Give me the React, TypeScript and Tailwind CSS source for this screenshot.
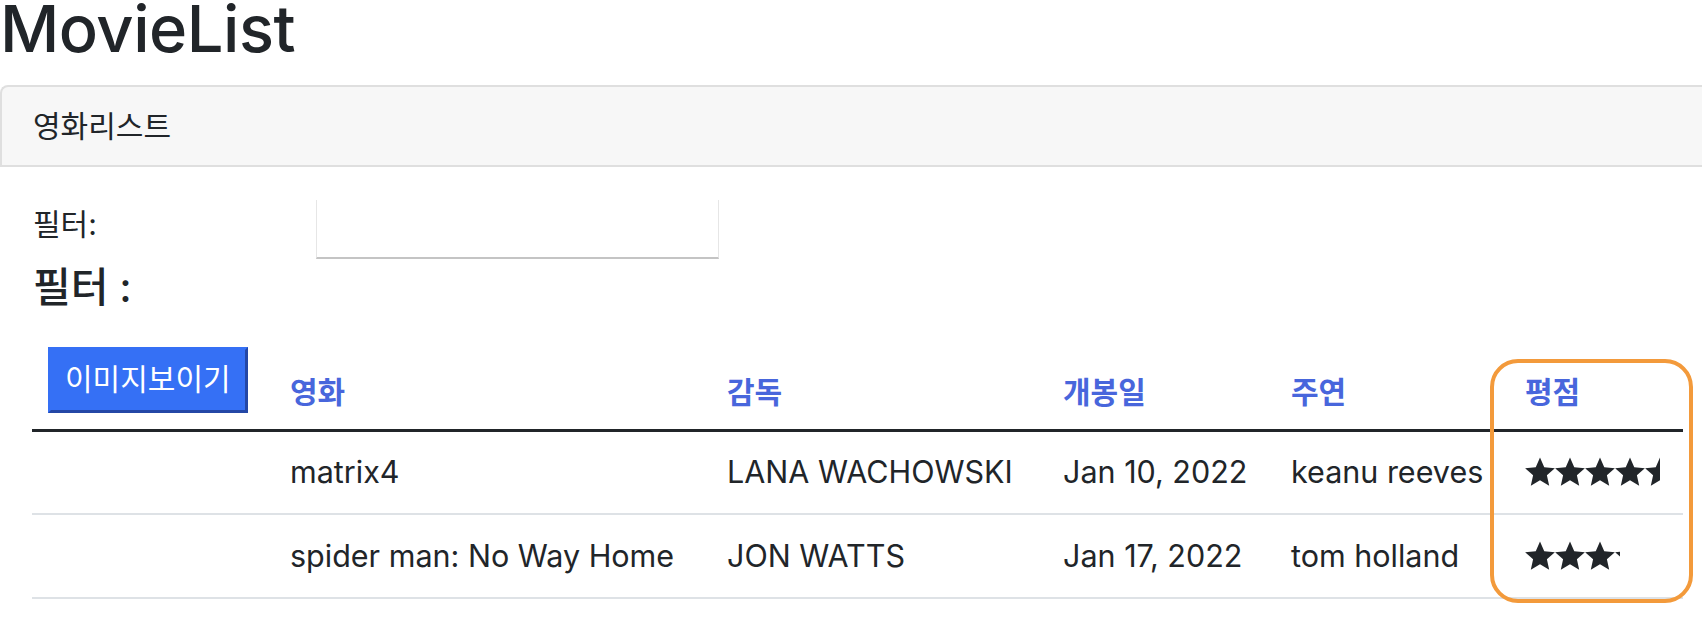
import React from 'react';

const FONT = '"Inter", "Noto Sans CJK KR", sans-serif';

type Movie = { title: string; director: string; date: string; actor: string; rate: number };

const movies: Movie[] = [
    { title: 'matrix4', director: 'LANA WACHOWSKI', date: 'Jan 10, 2022', actor: 'keanu reeves', rate: 4.5 },
    { title: 'spider man: No Way Home', director: 'JON WATTS', date: 'Jan 17, 2022', actor: 'tom holland', rate: 3.18 },
];

function Star() {
    return (
        <svg width="30" height="30" viewBox="0 0 24 24" className="shrink-0">
            <path d="M12 0.3L15.41 8.11L23.89 8.94L17.52 14.59L19.35 22.91L12 18.6L4.65 22.91L6.48 14.59L0.11 8.94L8.59 8.11Z" fill="#212529" />
        </svg>
    );
}

function Stars({ rate }: { rate: number }) {
    return (
        <div className="overflow-hidden" style={{ width: rate * 30 }}>
            <div className="flex w-[150px]">
                {[0, 1, 2, 3, 4].map(i => <Star key={i} />)}
            </div>
        </div>
    );
}

export default function App() {
    return (
        <div className="relative w-full h-[628px] overflow-hidden bg-white text-[#212529]" style={{ fontFamily: FONT }}>
            <h1 className="text-[65px] leading-[58px] h-[58px] font-medium tracking-[-0.5px]">MovieList</h1>

            <div className="mt-[27px] h-[82px] flex items-center pl-[31px] bg-[#f7f7f7] border-2 border-r-0 border-[#dfdfdf] rounded-tl-[8px] text-[30px]">
                영화리스트
            </div>

            <div className="pl-[33px]">
                <div className="mt-[33px] flex items-start h-[59px]">
                    <label className="w-[283px] mt-[2px] text-[30px] leading-[44px]">필터:</label>
                    <input className="w-[403px] h-[59px] bg-white border-l border-r border-[#e6e6e6] border-b-2 border-b-[#c4c4c4] outline-none" />
                </div>
                <h4 className="mt-[4px] text-[41px] leading-[48px] font-medium">필터 :</h4>
            </div>

            <table className="ml-[32px] w-[1651px] table-fixed border-collapse text-[30.5px]">
                <colgroup>
                    <col className="w-[242px]" />
                    <col className="w-[437px]" />
                    <col className="w-[336px]" />
                    <col className="w-[228px]" />
                    <col className="w-[234px]" />
                    <col className="w-[174px]" />
                </colgroup>
                <thead>
                    <tr className="h-[119px] border-b-[3px] border-[#212529]">
                        <th className="align-bottom text-left pl-[16px] pb-[16px]">
                            <button className="h-[66px] px-[14px] bg-[#3570f5] text-white text-[30px] font-normal whitespace-nowrap border-[3px] border-t-[#3570f5] border-l-[#3570f5] border-r-[#2447a6] border-b-[#2447a6]">
                                이미지보이기
                            </button>
                        </th>
                        {['영화', '감독', '개봉일', '주연', '평점'].map(h => (
                            <th key={h} className="align-bottom text-left pl-[16px] pb-[16px] text-[30px] leading-[42px] font-bold text-[#4866dc]">{h}</th>
                        ))}
                    </tr>
                </thead>
                <tbody>
                    {movies.map(m => (
                        <tr key={m.title} className="h-[84px] border-b-2 border-[#dee2e6]">
                            <td className="pl-[16px]"></td>
                            <td className="pl-[16px] whitespace-nowrap">{m.title}</td>
                            <td className="pl-[16px] whitespace-nowrap">{m.director}</td>
                            <td className="pl-[16px] whitespace-nowrap">{m.date}</td>
                            <td className="pl-[16px] whitespace-nowrap">{m.actor}</td>
                            <td className="pl-[16px]"><Stars rate={m.rate} /></td>
                        </tr>
                    ))}
                </tbody>
            </table>

            <div className="absolute left-[1490px] top-[359px] w-[203px] h-[244px] border-4 border-[#f39a3b] rounded-[28px] pointer-events-none" />
        </div>
    );
}
